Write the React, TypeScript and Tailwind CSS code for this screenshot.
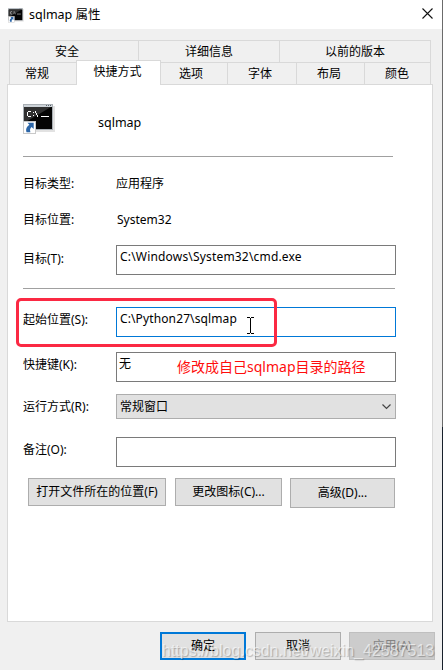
import type { ReactNode } from "react";

const ui = "font-['Noto_Sans','Noto_Sans_CJK_SC',sans-serif]";

function ConsoleIcon({ className }: { className: string }) {
  return (
    <svg viewBox="0 0 32 31" className={className}>
      <rect x="1" y="2" width="31" height="26" fill="#e2e2e2" />
      <rect x="0" y="0" width="30" height="26" fill="#a9afb4" />
      <rect x="1" y="1" width="28" height="2" fill="#cdd3d8" />
      <path d="M23 1.500h1M25 1.500h1M27 1.500h1" stroke="#59636b" />
      <rect x="1" y="3" width="28" height="22" fill="#050505" />
      <path d="M1 3h27L1 19z" fill="#303030" />
      <path
        d="M5 7.500h3M4.500 8v4M5 12.500h3M10 8.500h1M10 11.500h1M12.500 7v2M13.500 9v2M14.500 11v2M18 12.500h8"
        fill="none"
        stroke="#ffffff"
        strokeWidth="1"
      />
      <rect x="0.500" y="17.500" width="12" height="12" fill="#ffffff" stroke="#c9c9c9" />
      <path d="M4.500 18.800h6.200v6.200L8.600 23c-1.700 1.600-1.800 3-1.200 5.200H3.600c-1.200-3 .2-5.700 2.800-7.500z" fill="#2c66a8" />
    </svg>
  );
}

function Tab({ className, children }: { className: string; children: ReactNode }) {
  return (
    <div className={`flex shrink-0 items-center justify-center border-t border-l border-[#d9d9d9] ${className}`}>
      {children}
    </div>
  );
}

function Row({
  label,
  className,
  labelClass = "",
  children,
}: {
  label: string;
  className: string;
  labelClass?: string;
  children: ReactNode;
}) {
  return (
    <div className={`flex ${className}`}>
      <div className={`flex w-[93px] shrink-0 items-center ${labelClass}`}>{label}</div>
      {children}
    </div>
  );
}

function Button({ className, children }: { className: string; children: ReactNode }) {
  return <button className={`flex shrink-0 items-center justify-center ${className}`}>{children}</button>;
}

export default function App() {
  return (
    <div
      className={`relative flex h-[670px] w-[443px] overflow-hidden bg-[#f0f0f0] text-[12px] leading-[16px] whitespace-nowrap text-black ${ui}`}
    >
      <div className="flex w-[442px] shrink-0 flex-col">
        <header className="flex h-[29px] shrink-0 items-center bg-white pl-2">
          <ConsoleIcon className="mt-px h-[15px] w-4" />
          <span className="ml-[5px] text-[12.500px]">sqlmap 属性</span>
          <svg viewBox="0 0 11 11" className="mr-[9px] mb-[3px] ml-auto h-[11px] w-[11px]">
            <path d="M.5.500l10 10M10.500.500l-10 10" stroke="#111" strokeWidth="1.100" />
          </svg>
        </header>

        <nav className="mt-[11px] ml-[9px] w-[422px] shrink-0">
          <div className="flex h-[22px] border-r border-[#d9d9d9]">
            <Tab className="w-[129px] pr-[14px]">安全</Tab>
            <Tab className="w-[141px]">详细信息</Tab>
            <Tab className="w-[151px]">以前的版本</Tab>
          </div>
          <div className="flex h-[22px] border-r border-[#d9d9d9]">
            <Tab className="w-[67px] pr-[12px]">常规</Tab>
            <Tab className="relative z-10 -mt-[2px] h-[25px] w-[85px] border-r bg-white pr-[2px] pb-[2px]">快捷方式</Tab>
            <Tab className="w-[66px] border-l-0 pr-[6px]">选项</Tab>
            <Tab className="w-[69px] pr-1">字体</Tab>
            <Tab className="w-[68px] pr-[3px]">布局</Tab>
            <Tab className="w-[66px] pr-px">颜色</Tab>
          </div>
        </nav>

        <main className="ml-[7px] h-[538px] w-[426px] shrink-0 border border-[#d9d9d9] bg-white pl-[15px]">
          <div className="flex h-[71px]">
            <ConsoleIcon className="mt-[19px] h-[31px] w-8" />
            <span className="mt-[30px] ml-[43px] text-[12.500px]">sqlmap</span>
          </div>
          <div className="h-px w-[370px] bg-[#a0a0a0]" />
          <Row label="目标类型:" className="mt-3 h-[30px]">
            <span className="flex items-center">应用程序</span>
          </Row>
          <Row label="目标位置:" className="mt-[6px] h-[30px]">
            <span className="flex items-center pl-px">System32</span>
          </Row>
          <Row label="目标(T):" className="mt-[10px] h-[30px]" labelClass="pb-[2px]">
            <div className="w-[280px] border border-[#7a7a7a] pt-[3px] pl-[3px] tracking-[0.180px]">
              C:\Windows\System32\cmd.exe
            </div>
          </Row>
          <div className="mt-[13px] h-px w-[372px] bg-[#a0a0a0]" />
          <Row label="起始位置(S):" className="mt-[18px] h-[30px]" labelClass="pb-[4px]">
            <div className="w-[280px] border border-[#0078d7] pt-[3px] pl-[3px] tracking-[0.120px]">
              C:\Python27\sqlmap
            </div>
          </Row>
          <Row label="快捷键(K):" className="mt-[15px] h-[30px]" labelClass="pb-[4px]">
            <div className="flex w-[280px] border border-[#7a7a7a] pt-[3px] pl-[2px]">
              <span>无</span>
              <span className="mt-[3px] ml-[46px] text-[14px] text-[#ff0d0d]">修改成自己sqlmap目录的路径</span>
            </div>
          </Row>
          <Row label="运行方式(R):" className="mt-3 h-[25px]">
            <div className="flex w-[280px] items-center justify-between border border-[#adadad] bg-[#e1e1e1] pr-1 pl-[3px]">
              <span>常规窗口</span>
              <svg viewBox="0 0 9 6" className="h-[6px] w-[9px]">
                <path d="M.5.500l4 4 4-4" fill="none" stroke="#444" strokeWidth="1.200" />
              </svg>
            </div>
          </Row>
          <Row label="备注(O):" className="mt-[18px] h-[30px]" labelClass="pb-[4px]">
            <div className="w-[280px] border border-[#7a7a7a]" />
          </Row>
          <div className="mt-[11px] ml-[5px] flex items-start">
            <Button className="h-7 w-[138px] border border-[#adadad] bg-[#e1e1e1]">打开文件所在的位置(F)</Button>
            <Button className="ml-[9px] h-7 w-[107px] border border-[#adadad] bg-[#e1e1e1]">更改图标(C)...</Button>
            <Button className="ml-2 h-[30px] w-[105px] border border-[#adadad] bg-[#e1e1e1]">高级(D)...</Button>
          </div>
        </main>

        <footer className="mt-[10px] ml-[160px] flex">
          <Button className="h-7 w-[86px] border-2 border-[#0078d7] bg-[#e1e1e1]">确定</Button>
          <Button className="ml-[9px] h-7 w-[86px] border border-[#adadad] bg-[#e1e1e1]">取消</Button>
          <Button className="ml-2 h-7 w-[86px] border border-[#bfbfbf] bg-[#cccccc] text-[#838383]">应用(A)</Button>
        </footer>
      </div>

      <div className="flex w-px shrink-0 flex-col">
        <div className="h-[427px] bg-[#6b6b6b]" />
        <div className="h-[243px] bg-[#17202b]" />
      </div>

      <div className="absolute top-[298px] left-[16px] h-[49px] w-[261px] rounded-[5px] border-[3px] border-[#fb2943]" />
      <svg viewBox="0 0 7 17" className="absolute top-[317px] left-[247px] h-[17px] w-[7px]">
        <path d="M0 .5h3M4 .5h3M3.500 1v15M0 16.500h3M4 16.500h3" stroke="#000" />
      </svg>
      <div className="absolute top-[641px] left-[162px] font-['Liberation_Sans',sans-serif] text-[16px] leading-[20px] text-white/60 [text-shadow:1px_1px_1px_rgba(0,0,0,0.25)]">
        https://blog.csdn.net/weixin_42587513
      </div>
    </div>
  );
}
